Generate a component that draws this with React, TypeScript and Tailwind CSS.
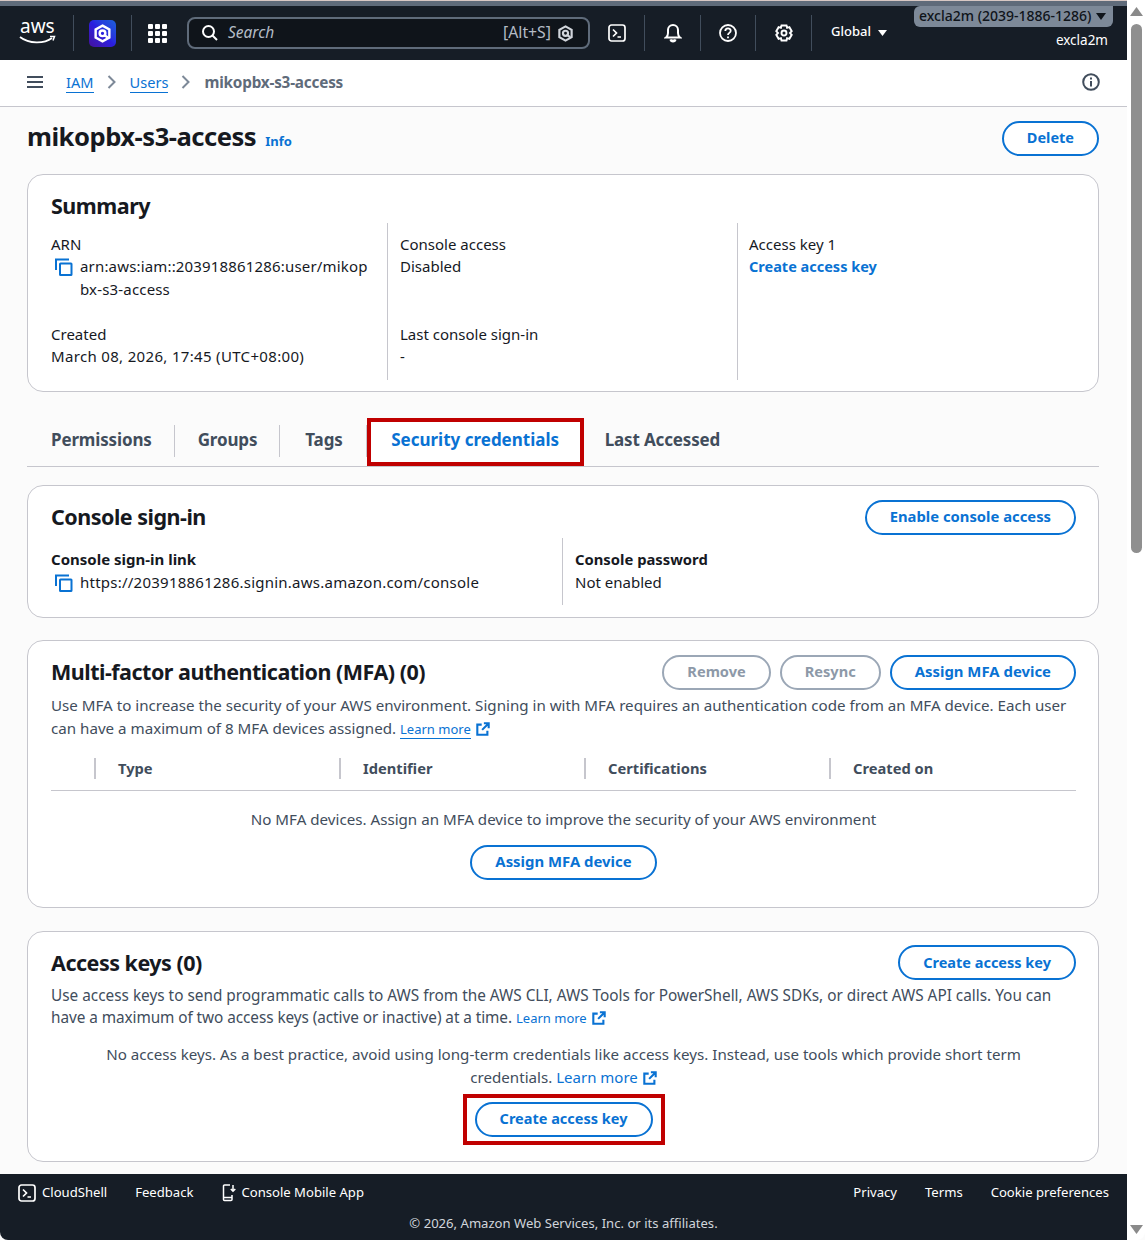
import React from "react";

const font = { fontFamily: '"Noto Sans", sans-serif' };

function Sep() {
  return <div className="w-px h-[36px] bg-[#414d5c] shrink-0" />;
}

function Copy() {
  return (
    <svg width="20" height="20" viewBox="0 0 20 20" fill="none" stroke="#0972d3" strokeWidth="2" className="shrink-0">
      <path d="M2 13V2.500h13" />
      <rect x="6" y="6.500" width="11.500" height="11.500" rx="0.500" />
    </svg>
  );
}

function Ext() {
  return (
    <svg width="14" height="14" viewBox="0 0 16 16" fill="none" stroke="#0972d3" strokeWidth="2.400" className="inline-block ml-[5px] align-[-2px]">
      <path d="M6.500 3H1.500v11.500h11.500V10" />
      <path d="M9 1.500h5.500V7M14 2L7 9" />
    </svg>
  );
}

function Learn({ className = "text-[13px]", under = false }: { className?: string; under?: boolean }) {
  return (
    <span className="whitespace-nowrap">
      <span className={`${className} text-[#0972d3] ${under ? "border-b border-[#0972d3]" : ""}`}>Learn more</span>
      <Ext />
    </span>
  );
}

function Btn({ children, className = "text-[14.9px] pb-[2px]" }: { children: React.ReactNode; className?: string }) {
  return (
    <div className={`h-[35px] px-[23px] flex items-center justify-center rounded-[18px] border-2 border-[#0972d3] text-[#0972d3] font-bold bg-white whitespace-nowrap ${className}`}>
      {children}
    </div>
  );
}

function DisabledBtn({ children }: { children: React.ReactNode }) {
  return (
    <div className="h-[35px] px-[23px] pb-[2px] flex items-center justify-center rounded-[18px] border-2 border-[#9ba7b6] text-[#8d99a8] text-[14.6px] font-bold bg-white">
      {children}
    </div>
  );
}

function Card({ children, className = "" }: { children: React.ReactNode; className?: string }) {
  return <section className={`rounded-[16px] border border-[#c6c6cd] bg-white ${className}`}>{children}</section>;
}

function H2({ children, className = "pb-[1px]" }: { children: React.ReactNode; className?: string }) {
  return <h2 className={`text-[21.5px] leading-[28px] font-bold tracking-[-0.5px] text-[#16191f] ${className}`}>{children}</h2>;
}

function CloudShell({ size = 18 }: { size?: number }) {
  return (
    <svg width={size} height={size} viewBox="0 0 18 18" fill="none" stroke="#fff" strokeWidth="1.700">
      <rect x="1" y="1" width="16" height="16" rx="2.500" />
      <path d="M5 5.500L8.500 9 5 12.500M9.500 13h3.500" />
    </svg>
  );
}

function Q({ size = 18, color = "#fff" }: { size?: number; color?: string }) {
  return (
    <svg width={size} height={size} viewBox="0 0 18 18" fill="none" stroke={color} strokeWidth="2.300">
      <path d="M9 1.500l6.500 3.700v7.600L9 16.500l-6.500-3.700V5.200z" />
      <circle cx="9" cy="8.800" r="2.700" />
      <path d="M10.500 10.500l3.500 2.300" />
    </svg>
  );
}

function Chev() {
  return (
    <svg width="10" height="14" viewBox="0 0 10 14" fill="none" stroke="#7d8998" strokeWidth="2" className="ml-[13px] mr-[13px]">
      <path d="M1.500 1l6 6-6 6" />
    </svg>
  );
}

export default function App() {
  return (
    <div className="w-[1145px] h-[1240px] overflow-hidden flex bg-[#fbfbfb] text-[#16191f] text-[15px]" style={font}>
      <div className="w-[1127px] h-full flex flex-col">
        {/* Browser strip */}
        <div className="h-[6px] bg-[#5f6b7a] border-t border-[#d8c8c4]" />
        {/* Top nav */}
        <header className="h-[54px] bg-[#161d26] flex items-center text-white relative">
          <div className="w-[73px] pl-[19px] flex items-center shrink-0">
            <svg width="44" height="34" viewBox="0 0 44 34" fill="none" className="shrink-0">
              <text x="1" y="17" fill="#fff" fontSize="19" fontFamily="Noto Sans, sans-serif">aws</text>
              <path d="M1 21c9 7 24 7 32 1" stroke="#fff" strokeWidth="1.800" />
              <path d="M31 20.500h4.500l-1.500 4" stroke="#fff" strokeWidth="1.500" />
            </svg>
          </div>
          <Sep />
          <div className="w-[57px] flex justify-center shrink-0">
            <div className="w-[27px] h-[27px] rounded-[5px] bg-gradient-to-tr from-[#43109c] via-[#2a1ee0] to-[#1f5fd8] flex items-center justify-center">
              <Q size={19} />
            </div>
          </div>
          <Sep />
          <div className="w-[55px] pl-[16px] shrink-0">
            <div className="grid grid-cols-3 gap-[2px] w-[19px]">
              {Array.from({ length: 9 }).map((_, i) => (
                <div key={i} className="w-[5px] h-[5px] bg-white rounded-[1px]" />
              ))}
            </div>
          </div>
          <div className="w-[403px] h-[32px] rounded-[8px] border-2 border-[#5f6b7a] bg-[#0f141a] flex items-center pl-[12px] pr-[14px] shrink-0">
            <svg width="18" height="18" viewBox="0 0 18 18" fill="none" stroke="#fff" strokeWidth="2">
              <circle cx="7.500" cy="7.500" r="5.500" />
              <path d="M11.500 11.500L16 16" />
            </svg>
            <span className="ml-[9px] italic text-[15.5px] text-[#b4bcc6]">Search</span>
            <span className="ml-auto text-[15.8px] text-[#b4bcc6]">[Alt+S]</span>
            <span className="ml-[6px]"><Q size={17} color="#d1d5db" /></span>
          </div>
          <div className="w-[54px] flex justify-center shrink-0"><CloudShell /></div>
          <Sep />
          <div className="w-[55px] flex justify-center shrink-0">
            <svg width="18" height="20" viewBox="0 0 18 20" fill="none" stroke="#fff" strokeWidth="2">
              <path d="M2 14.500c1.500-1 2-2.200 2-4.500V7a5 5 0 0 1 10 0v3c0 2.300.5 3.500 2 4.500z" />
              <path d="M6.500 16.500c.5 2.500 4.500 2.500 5 0" fill="#fff" />
            </svg>
          </div>
          <Sep />
          <div className="w-[54px] flex justify-center shrink-0">
            <svg width="18" height="18" viewBox="0 0 18 18" fill="none" stroke="#fff" strokeWidth="1.800">
              <circle cx="9" cy="9" r="8" />
              <path d="M6.300 7c0-3.500 5.400-3.500 5.400-.2 0 2.200-2.700 2-2.700 4.200" />
              <path d="M9 12.500v1.800" />
            </svg>
          </div>
          <Sep />
          <div className="w-[55px] flex justify-center shrink-0">
            <svg width="18" height="18" viewBox="0 0 18 18" fill="none" stroke="#fff" strokeWidth="1.900">
              <path d="M6.500 1.500h5l.6 2.300 2.300-.6 2.300 4-1.700 1.800 1.700 1.800-2.300 4-2.300-.6-.6 2.300h-5l-.6-2.300-2.300.6-2.300-4 1.700-1.800-1.700-1.800 2.300-4 2.300.6z" />
              <circle cx="9" cy="9" r="2.500" />
            </svg>
          </div>
          <Sep />
          <div className="ml-[19px] pb-[3px] flex items-center text-[13px] font-medium">
            Global
            <svg width="9" height="6" viewBox="0 0 9 6" className="ml-[7px] mt-[2px]"><path d="M0 0h9L4.500 6z" fill="#fff" /></svg>
          </div>
          <div className="absolute right-[14px] top-0 w-[199px] h-[21px] pb-[2px] rounded-b-[6px] rounded-tl-[6px] bg-[#7d8998] text-[#0f141a] text-[14px] font-medium flex items-center pl-[5px] whitespace-nowrap">
            excla2m (2039-1886-1286)
            <svg width="10" height="7" viewBox="0 0 10 7" className="ml-[5px] mt-[2px]"><path d="M0 0h10L5 7z" fill="#0f141a" /></svg>
          </div>
          <div className="absolute right-[19px] top-[25px] text-[13.5px] leading-[18px]">excla2m</div>
        </header>
        {/* Breadcrumb */}
        <div className="h-[47px] bg-white border-b border-[#c6c6cd] flex items-center pl-[27px] pr-[27px] pb-[2px] text-[#5f6b7a]">
          <svg width="16" height="14" viewBox="0 0 16 14" stroke="#414d5c" strokeWidth="2"><path d="M0 2h16M0 7h16M0 12h16" /></svg>
          <span className="ml-[23px] text-[14.6px] text-[#0972d3] border-b border-[#0972d3] leading-[20px]">IAM</span>
          <Chev />
          <span className="text-[14.6px] text-[#0972d3] border-b border-[#0972d3] leading-[20px]">Users</span>
          <Chev />
          <span className="font-bold text-[15.3px] tracking-[-0.2px]">mikopbx-s3-access</span>
          <svg width="18" height="18" viewBox="0 0 18 18" fill="none" stroke="#414d5c" strokeWidth="2" className="ml-auto">
            <circle cx="9" cy="9" r="7.800" />
            <path d="M9 8v5.500M9 4.500v2" />
          </svg>
        </div>
        {/* Content */}
        <main className="flex-1 px-[27px] pr-[28px]">
          <div className="h-[67px] pb-[4px] flex items-center justify-between">
            <div className="flex items-baseline pb-[3px]">
              <h1 className="text-[25.6px] font-bold tracking-[-0.5px]">mikopbx-s3-access</h1>
              <span className="ml-[9px] text-[#0972d3] text-[13px] font-bold">Info</span>
            </div>
            <Btn className="text-[14.5px] pb-[2px]">Delete</Btn>
          </div>

          <Card className="h-[218px] pl-[23px] pr-[23px] pt-[17px]">
            <H2 className="pb-[1px]">Summary</H2>
            <div className="grid grid-cols-[337px_350px_1fr] mt-[2px] h-[157px] leading-[22px]">
              <div className="border-r border-[#c6c6cd] pt-[10px] pr-[12px]">
                <div>ARN</div>
                <div className="flex pl-[3px]">
                  <span className="pt-[2px] mr-[6px]"><Copy /></span>
                  <span className="leading-[23px] tracking-[0.17px]">
                    <span className="block whitespace-nowrap">arn:aws:iam::203918861286:user/mikop</span>
                    <span className="block whitespace-nowrap">bx-s3-access</span>
                  </span>
                </div>
                <div className="mt-[22px]">Created</div>
                <div className="tracking-[0.33px] whitespace-nowrap">March 08, 2026, 17:45 (UTC+08:00)</div>
              </div>
              <div className="border-r border-[#c6c6cd] pt-[10px] pl-[12px]">
                <div>Console access</div>
                <div>Disabled</div>
                <div className="mt-[46px]">Last console sign-in</div>
                <div>-</div>
              </div>
              <div className="pt-[10px] pl-[11px]">
                <div>Access key 1</div>
                <div className="text-[#0972d3] font-bold text-[14.5px]">Create access key</div>
              </div>
            </div>
          </Card>

          {/* Tabs */}
          <div className="mt-[26px] h-[49px] pb-[4px] border-b border-[#c6c6cd] flex items-center text-[#414d5c] text-[17px] font-bold tracking-[-0.15px]">
            <span className="pl-[24px] pr-[22px]">Permissions</span>
            <div className="w-px h-[32px] mt-[2px] bg-[#c6c6cd]" />
            <span className="pl-[23px] pr-[22px]">Groups</span>
            <div className="w-px h-[32px] mt-[2px] bg-[#c6c6cd]" />
            <span className="pl-[25px] pr-[23px]">Tags</span>
            <div className="w-px h-[32px] mt-[2px] bg-[#c6c6cd]" />
            <div className="w-[217px] h-[48px] mt-[4px] pb-[5px] border-[4px] border-[#c00000] flex items-center justify-center text-[#0972d3] bg-white tracking-[0px]">Security credentials</div>
            <span className="pl-[21px]">Last Accessed</span>
          </div>

          {/* Console sign-in */}
          <Card className="mt-[18px] h-[133px] pl-[23px] pr-[22px] pt-[14px]">
            <div className="flex justify-between items-center h-[35px]">
              <H2>Console sign-in</H2>
              <Btn className="text-[14.8px] pb-[3px]">Enable console access</Btn>
            </div>
            <div className="flex mt-[3px] h-[67px] leading-[22px]">
              <div className="w-[512px] border-r border-[#c6c6cd] pt-[10px]">
                <div className="font-bold">Console sign-in link</div>
                <div className="flex items-center pl-[3px] mt-[1px]">
                  <span className="mr-[6px] mt-[1px]"><Copy /></span>
                  <span className="tracking-[0.24px]">https://203918861286.signin.aws.amazon.com/console</span>
                </div>
              </div>
              <div className="pl-[12px] pt-[10px]">
                <div className="font-bold text-[14.8px]">Console password</div>
                <div className="mt-[1px]">Not enabled</div>
              </div>
            </div>
          </Card>

          {/* MFA */}
          <Card className="mt-[22px] h-[268px] pl-[23px] pr-[22px] pt-[14px]">
            <div className="flex justify-between items-center h-[35px]">
              <H2>Multi-factor authentication (MFA) (0)</H2>
              <div className="flex gap-[9px]">
                <DisabledBtn>Remove</DisabledBtn>
                <DisabledBtn>Resync</DisabledBtn>
                <Btn>Assign MFA device</Btn>
              </div>
            </div>
            <p className="mt-[4px] leading-[23px] text-[15.15px] text-[#414d5c]">
              Use MFA to increase the security of your AWS environment. Signing in with MFA requires an authentication code from an MFA device. Each user can have a maximum of 8 MFA devices assigned. <Learn under />
            </p>
            <div className="mt-[17px] h-[33px] border-b border-[#c6c6cd] flex font-bold text-[14.7px] text-[#414d5c] pl-[43px]">
              {["Type", "Identifier", "Certifications", "Created on"].map((t) => (
                <div key={t} className="w-[245px] h-[21px] border-l-2 border-[#c6c6cd] pl-[22px] flex items-center">{t}</div>
              ))}
            </div>
            <div className="mt-[17px] text-center text-[15.15px] text-[#414d5c] leading-[22px]">No MFA devices. Assign an MFA device to improve the security of your AWS environment</div>
            <div className="mt-[15px] flex justify-center"><Btn>Assign MFA device</Btn></div>
          </Card>

          {/* Access keys */}
          <Card className="mt-[23px] h-[231px] pl-[23px] pr-[22px] pt-[13px]">
            <div className="flex justify-between items-center h-[35px]">
              <H2 className="pb-[0px]">Access keys (0)</H2>
              <Btn className="text-[14.5px] pt-[1px] pb-[1px]">Create access key</Btn>
            </div>
            <p className="mt-[4px] leading-[22px] text-[15.35px] text-[#414d5c]">
              Use access keys to send programmatic calls to AWS from the AWS CLI, AWS Tools for PowerShell, AWS SDKs, or direct AWS API calls. You can <span className="tracking-[-0.07px]">have a maximum of two access keys (active or inactive) at a time.</span> <Learn />
            </p>
            <p className="mt-[14px] px-[40px] text-center leading-[23px] text-[15.15px] text-[#414d5c]">
              No access keys. As a best practice, avoid using long-term credentials like access keys. Instead, use tools which provide short term credentials. <Learn className="text-[15px]" />
            </p>
            <div className="mt-[5px] flex justify-center">
              <div className="border-[4px] border-[#c00000] px-[8px] py-[4px]">
                <Btn className="text-[14.5px] pb-[2px] w-[178px]">Create access key</Btn>
              </div>
            </div>
          </Card>
        </main>
        {/* Footer */}
        <footer className="h-[66px] bg-[#161d26] text-white text-[13.1px] rounded-bl-[8px] pt-[10px] px-[18px]">
          <div className="flex items-center h-[18px]">
            <CloudShell />
            <span className="ml-[6px]">CloudShell</span>
            <span className="ml-[28px]">Feedback</span>
            <svg width="14" height="18" viewBox="0 0 14 18" fill="none" stroke="#fff" strokeWidth="1.500" className="ml-[29px]">
              <path d="M8 1H2.500a1 1 0 0 0-1 1v13.500a1 1 0 0 0 1 1h6.500a1 1 0 0 0 1-1V11M1.500 13.500H10" />
              <path d="M11 1v6M8.800 5l2.200 2.300L13.300 5" />
            </svg>
            <span className="ml-[5px]">Console Mobile App</span>
            <span className="ml-auto">Privacy</span>
            <span className="ml-[28px]">Terms</span>
            <span className="ml-[28px]">Cookie preferences</span>
          </div>
          <div className="mt-[12px] text-center text-[#d1d5db] text-[13.1px] leading-[18px]">© 2026, Amazon Web Services, Inc. or its affiliates.</div>
        </footer>
      </div>
      {/* Scrollbar */}
      <div className="w-[18px] h-full bg-white flex flex-col items-center pt-[6px] pb-[3px] rounded-br-[8px]">
        <svg width="13" height="9" viewBox="0 0 13 9" className="mt-[1px]"><path d="M6.500 0L13 9H0z" fill="#8a8a8a" /></svg>
        <div className="w-[11px] h-[529px] mt-[8px] rounded-[6px] bg-[#8f8f8f]" />
        <svg width="13" height="9" viewBox="0 0 13 9" className="mt-auto mb-[3px]"><path d="M0 0h13L6.500 9z" fill="#8a8a8a" /></svg>
      </div>
    </div>
  );
}
